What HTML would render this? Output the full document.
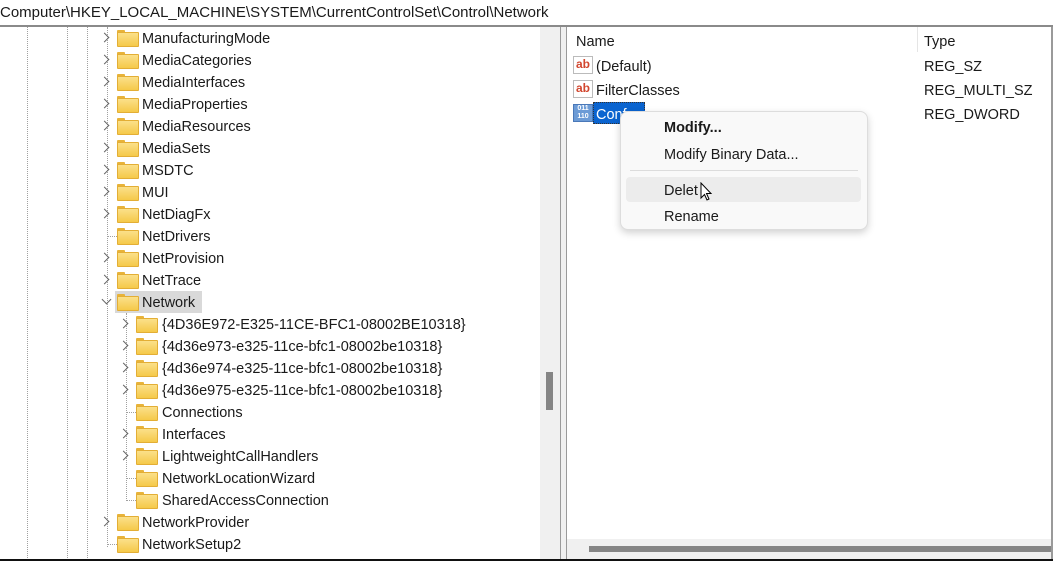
<!DOCTYPE html>
<html><head><style>
*{margin:0;padding:0;box-sizing:border-box}
body{width:1053px;height:561px;overflow:hidden;background:#fff;font-family:"Liberation Sans",sans-serif;font-size:14.5px;color:#1a1a1a;position:relative}
.a{position:absolute;white-space:nowrap}
.vd{position:absolute;width:0;border-left:1px dotted #a0a0a0}
.hd{position:absolute;height:0;border-top:1px dotted #a0a0a0}
.chev{position:absolute;width:7px;height:7px;border-right:1.3px solid #666;border-bottom:1.3px solid #666;transform:rotate(-45deg)}
.fold{position:absolute;width:20px;height:15px}
.fold:before{content:"";position:absolute;left:0;top:0;width:8px;height:4px;background:#e8b33a;border-radius:1px 1px 0 0}
.fold:after{content:"";position:absolute;left:0;top:2px;width:20px;height:13px;background:linear-gradient(#fbe08a,#f5c94a);border:1px solid #e3ae35;border-radius:1px}
</style></head><body>
<div class="a" style="left:0;top:4px;font-size:15px">Computer\HKEY_LOCAL_MACHINE\SYSTEM\CurrentControlSet\Control\Network</div>
<div class="a" style="left:0;top:25px;width:1053px;height:2px;background:#8a8a8a"></div>
<div class="vd" style="left:27px;top:27px;height:533px"></div>
<div class="vd" style="left:67px;top:27px;height:533px"></div>
<div class="vd" style="left:87px;top:27px;height:533px"></div>
<div class="vd" style="left:107px;top:27px;height:520px"></div>
<div class="vd" style="left:126px;top:313px;height:188px"></div>
<div class="a" style="left:540px;top:27px;width:20px;height:533px;background:#f0f0f0"></div>
<div class="a" style="left:546px;top:372px;width:7px;height:38px;background:#858585"></div>
<div class="a" style="left:560px;top:27px;width:1px;height:533px;background:#9a9a9a"></div>
<div class="a" style="left:566px;top:27px;width:1px;height:533px;background:#9a9a9a"></div>
<div class="a" style="left:561px;top:27px;width:5px;height:533px;background:#f0f0f0"></div>
<div class="a" style="left:1051px;top:27px;width:2px;height:533px;background:#9a9a9a"></div>
<div class="a" style="left:0;top:559px;width:1053px;height:2px;background:#111"></div>
<div class="a" style="left:567px;top:539px;width:484px;height:20px;background:#f0f0f0"></div>
<div class="a" style="left:589px;top:546px;width:462px;height:6px;background:#858585"></div>
<div class="a" style="left:115px;top:291px;width:87px;height:22px;background:#d9d9d9"></div>
<div id="tree"></div>
<div class="a" style="left:576px;top:34px">Name</div>
<div class="a" style="left:917px;top:27px;width:1px;height:25px;background:#e5e5e5"></div>
<div class="a" style="left:924px;top:34px">Type</div>
<div class="a" style="left:573px;top:56px;width:20px;height:18px;border:1px solid #bbb;background:#fff;color:#d2462e;font-weight:bold;font-size:12px;line-height:15px;text-align:center">ab</div>
<div class="a" style="left:596px;top:59px">(Default)</div>
<div class="a" style="left:924px;top:59px">REG_SZ</div>
<div class="a" style="left:573px;top:80px;width:20px;height:18px;border:1px solid #bbb;background:#fff;color:#d2462e;font-weight:bold;font-size:12px;line-height:15px;text-align:center">ab</div>
<div class="a" style="left:596px;top:83px">FilterClasses</div>
<div class="a" style="left:924px;top:83px">REG_MULTI_SZ</div>
<div class="a" style="left:573px;top:104px;width:20px;height:18px;background:#6c9bd6;border:1px solid #4a78b8;color:#fff;font-size:7px;line-height:8px;text-align:center;font-weight:bold">011<br>110</div>
<div class="a" style="left:593px;top:102px;width:52px;height:22px;background:#0a64d0;border:1px dotted #333"></div>
<div class="a" style="left:596px;top:107px;color:#fff">Conf</div>
<div class="a" style="left:924px;top:107px">REG_DWORD</div>
<div class="a" style="left:620px;top:111px;width:248px;height:119px;background:#f9f9f9;border:1px solid #ddd;border-radius:8px;box-shadow:0 3px 8px rgba(0,0,0,.18)"></div>
<div class="a" style="left:664px;top:120px;font-weight:bold">Modify...</div>
<div class="a" style="left:664px;top:147px">Modify Binary Data...</div>
<div class="a" style="left:630px;top:170px;width:228px;height:1px;background:#dcdcdc"></div>
<div class="a" style="left:626px;top:177px;width:235px;height:25px;background:#ececec;border-radius:4px"></div>
<div class="a" style="left:664px;top:183px">Delet</div>
<svg class="a" style="left:700px;top:182px" width="14" height="20" viewBox="0 0 14 20"><path d="M1 1 L1 16 L4.5 12.5 L7 18 L9 17 L6.5 11.5 L11 11.5 Z" fill="#fff" stroke="#000" stroke-width="1"/></svg>
<div class="a" style="left:664px;top:209px">Rename</div>
<script>
const rows=[
[2,1,"ManufacturingMode"],[2,1,"MediaCategories"],[2,1,"MediaInterfaces"],[2,1,"MediaProperties"],[2,1,"MediaResources"],[2,1,"MediaSets"],[2,1,"MSDTC"],[2,1,"MUI"],[2,1,"NetDiagFx"],[2,0,"NetDrivers"],[2,1,"NetProvision"],[2,1,"NetTrace"],[2,2,"Network"],
[3,1,"{4D36E972-E325-11CE-BFC1-08002BE10318}"],[3,1,"{4d36e973-e325-11ce-bfc1-08002be10318}"],[3,1,"{4d36e974-e325-11ce-bfc1-08002be10318}"],[3,1,"{4d36e975-e325-11ce-bfc1-08002be10318}"],[3,0,"Connections"],[3,1,"Interfaces"],[3,1,"LightweightCallHandlers"],[3,0,"NetworkLocationWizard"],[3,0,"SharedAccessConnection"],
[2,1,"NetworkProvider"],[2,0,"NetworkSetup2"]];
let h="";
rows.forEach((r,i)=>{const cy=38+i*22;const l=r[0];const cx=l==2?107:126;const fx=l==2?117:136;const tx=l==2?142:162;
if(r[1]==1)h+=`<div class="chev" style="left:${cx-6}px;top:${cy-4}px"></div>`;
else if(r[1]==2)h+=`<div class="chev" style="left:${cx-4}px;top:${cy-6}px;transform:rotate(45deg)"></div>`;
else h+=`<div class="hd" style="left:${cx}px;top:${cy}px;width:${fx-cx}px"></div>`;
h+=`<div class="fold" style="left:${fx}px;top:${cy-8}px"></div><div class="a" style="left:${tx}px;top:${cy-7}px">${r[2]}</div>`;});
document.getElementById("tree").innerHTML=h;
</script>
</body></html>
